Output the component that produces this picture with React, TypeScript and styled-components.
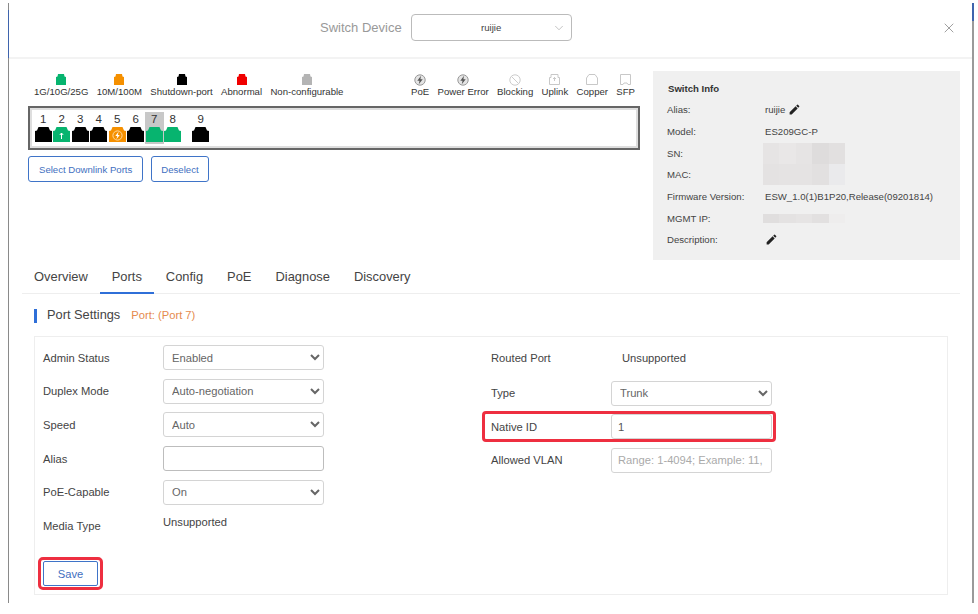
import React from 'react';
import styled, { createGlobalStyle } from 'styled-components';
import { ChevronDown, X } from 'lucide-react';
import { MdEdit } from 'react-icons/md';

const GlobalStyle = createGlobalStyle`
  html, body {
    margin: 0;
    background: #fff;
    overflow: hidden;
  }
  body {
    font-family: "Liberation Sans", Arial, sans-serif;
    color: #333;
  }
`;

const PORT_PATH = 'M0 15V4l2-.5L3.500 0h10L15 3.500l2 .5v11z';

const PortIcon = ({ color, kind }: { color: string; kind?: 'up' | 'poe' }) => (
  <svg width="17" height="15" viewBox="0 0 17 15">
    <path d={PORT_PATH} fill={color} />
    {kind === 'up' && <path d="M8.5 6v6M6.8 8l1.700-2 1.700 2" stroke="#fff" fill="none" strokeWidth="1" />}
    {kind === 'poe' && (
      <>
        <circle cx="8.5" cy="8.5" r="4.6" fill="none" stroke="#ffd9a0" strokeWidth="1" />
        <path d="M9.600 4.800 6.300 9h2l-.9 3.200L10.800 8h-2z" fill="#fff" />
      </>
    )}
  </svg>
);

const LegendPort = ({ color }: { color: string }) => (
  <svg width="10" height="11" viewBox="0 0 10 11">
    <path d="M0 11V3l1.500-.5L2 0h6l.5 2.500L10 3v8z" fill={color} />
  </svg>
);

const BoltIcon = () => (
  <svg width="12" height="12" viewBox="0 0 12 12">
    <circle cx="6" cy="6" r="5.200" fill="#e4e4e4" stroke="#999" />
    <path d="M7 1.800 3.300 6.700h2.200L4.800 10.200 8.700 5.200H6.400z" fill="#555" />
  </svg>
);

const BlockIcon = () => (
  <svg width="12" height="12" viewBox="0 0 12 12">
    <circle cx="6" cy="6" r="5.200" fill="none" stroke="#ccc" />
    <path d="M2.500 2.500l7 7" stroke="#ccc" />
  </svg>
);

const UplinkIcon = () => (
  <svg width="11" height="11" viewBox="0 0 11 11">
    <path d="M.5 10.500V3.500h1.500V.5h7v3h1.500v7z" fill="none" stroke="#c8c8c8" />
    <path d="M5.500 7V3.500M4 5l1.500-1.500L7 5" fill="none" stroke="#bbb" strokeWidth=".8" />
  </svg>
);

const CopperIcon = () => (
  <svg width="12" height="11" viewBox="0 0 12 11">
    <path d="M.5 10.500V4L3 .5h6L11.500 4v6.500z" fill="none" stroke="#c8c8c8" />
  </svg>
);

const SfpIcon = () => (
  <svg width="11" height="11" viewBox="0 0 11 11">
    <path d="M.5.500h10v10H8l-1-1.500H4l-1 1.500H.5z" fill="none" stroke="#c8c8c8" />
  </svg>
);

const statusLegend = [
  { label: '1G/10G/25G', color: '#07b46f' },
  { label: '10M/100M', color: '#f59000' },
  { label: 'Shutdown-port', color: '#000' },
  { label: 'Abnormal', color: '#f00000' },
  { label: 'Non-configurable', color: '#b4b4b4' },
];

const typeLegend = [
  { label: 'PoE', icon: <BoltIcon /> },
  { label: 'Power Error', icon: <BoltIcon /> },
  { label: 'Blocking', icon: <BlockIcon /> },
  { label: 'Uplink', icon: <UplinkIcon /> },
  { label: 'Copper', icon: <CopperIcon /> },
  { label: 'SFP', icon: <SfpIcon /> },
];

const ports: { n: number; color: string; kind?: 'up' | 'poe' }[] = [
  { n: 1, color: '#000' },
  { n: 2, color: '#07b46f', kind: 'up' },
  { n: 3, color: '#000' },
  { n: 4, color: '#000' },
  { n: 5, color: '#f59000', kind: 'poe' },
  { n: 6, color: '#000' },
  { n: 7, color: '#07b46f' },
  { n: 8, color: '#07b46f' },
  { n: 9, color: '#000' },
];

const snMosaic = ['#e6e4e4', '#e9e7e7', '#e6e4e4', '#dedcdc', '#e2e0e0'];
const macMosaic = ['#e4e2e2', '#e5e3e3', '#e5e3e3', '#e2e0e0', '#eaeaec'];
const ipMosaic = ['#e0dede', '#e4e2e2', '#e6e4e4', '#e2e0e0', '#eeeded'];

const tabs = ['Overview', 'Ports', 'Config', 'PoE', 'Diagnose', 'Discovery'];

const App = () => {
  return (
    <>
      <GlobalStyle />
      <Modal>
        <Header>
          <HeaderTitle>Switch Device</HeaderTitle>
          <DeviceSelect>
            ruijie
            <DeviceChevron>
              <ChevronDown size={14} strokeWidth={1} />
            </DeviceChevron>
          </DeviceSelect>
          <CloseButton>
            <X size={16} strokeWidth={1.2} />
          </CloseButton>
        </Header>

        <TopSection>
          <DevicePane>
            <LegendBar>
              <LegendGroup>
                {statusLegend.map((item) => (
                  <LegendItem key={item.label}>
                    <LegendIcon>
                      <LegendPort color={item.color} />
                    </LegendIcon>
                    {item.label}
                  </LegendItem>
                ))}
              </LegendGroup>
              <LegendGroup>
                {typeLegend.map((item) => (
                  <LegendItem key={item.label}>
                    <LegendIcon>{item.icon}</LegendIcon>
                    {item.label}
                  </LegendItem>
                ))}
              </LegendGroup>
            </LegendBar>

            <PortPanel>
              {ports.map((p) => (
                <PortCell key={p.n} $selected={p.n === 7} $gap={p.n === 9}>
                  <PortNumber>{p.n}</PortNumber>
                  <PortIcon color={p.color} kind={p.kind} />
                </PortCell>
              ))}
            </PortPanel>

            <ButtonRow>
              <OutlineButton>Select Downlink Ports</OutlineButton>
              <OutlineButton $tight>Deselect</OutlineButton>
            </ButtonRow>
          </DevicePane>

          <InfoPanel>
            <InfoTitle>Switch Info</InfoTitle>
            <InfoRow>
              <InfoLabel>Alias:</InfoLabel>
              <InfoValue>
                ruijie <MdEdit size={13} color="#222" />
              </InfoValue>
            </InfoRow>
            <InfoRow>
              <InfoLabel>Model:</InfoLabel>
              <InfoValue>ES209GC-P</InfoValue>
            </InfoRow>
            <InfoRow>
              <InfoLabel>SN:</InfoLabel>
              <Mosaic $height={21}>
                {snMosaic.map((c, i) => (
                  <MosaicCell key={i} style={{ background: c }} />
                ))}
              </Mosaic>
            </InfoRow>
            <InfoRow>
              <InfoLabel>MAC:</InfoLabel>
              <Mosaic $height={21}>
                {macMosaic.map((c, i) => (
                  <MosaicCell key={i} style={{ background: c }} />
                ))}
              </Mosaic>
            </InfoRow>
            <InfoRow>
              <InfoLabel>Firmware Version:</InfoLabel>
              <InfoValue>ESW_1.0(1)B1P20,Release(09201814)</InfoValue>
            </InfoRow>
            <InfoRow>
              <InfoLabel>MGMT IP:</InfoLabel>
              <Mosaic $height={9}>
                {ipMosaic.map((c, i) => (
                  <MosaicCell key={i} style={{ background: c }} />
                ))}
              </Mosaic>
            </InfoRow>
            <InfoRow>
              <InfoLabel>Description:</InfoLabel>
              <InfoValue>
                <MdEdit size={13} color="#222" />
              </InfoValue>
            </InfoRow>
          </InfoPanel>
        </TopSection>

        <TabBar>
          {tabs.map((t) => (
            <Tab key={t} $active={t === 'Ports'}>
              {t}
            </Tab>
          ))}
        </TabBar>

        <SectionHead>
          <SectionTitle>Port Settings</SectionTitle>
          <SectionNote>Port: (Port 7)</SectionNote>
        </SectionHead>

        <FormBox>
          <FormColumn>
            <FormRow>
              <FieldLabel>Admin Status</FieldLabel>
              <FieldSelect defaultValue="Enabled">
                <option>Enabled</option>
                <option>Disabled</option>
              </FieldSelect>
            </FormRow>
            <FormRow>
              <FieldLabel>Duplex Mode</FieldLabel>
              <FieldSelect defaultValue="Auto-negotiation">
                <option>Auto-negotiation</option>
                <option>Full</option>
              </FieldSelect>
            </FormRow>
            <FormRow>
              <FieldLabel>Speed</FieldLabel>
              <FieldSelect defaultValue="Auto">
                <option>Auto</option>
                <option>1000M</option>
              </FieldSelect>
            </FormRow>
            <FormRow>
              <FieldLabel>Alias</FieldLabel>
              <FieldInput $strong />
            </FormRow>
            <FormRow>
              <FieldLabel>PoE-Capable</FieldLabel>
              <FieldSelect defaultValue="On">
                <option>On</option>
                <option>Off</option>
              </FieldSelect>
            </FormRow>
            <FormRow>
              <FieldLabel>Media Type</FieldLabel>
              <RaisedValue>Unsupported</RaisedValue>
            </FormRow>
            <SaveWrap>
              <SaveButton>Save</SaveButton>
            </SaveWrap>
          </FormColumn>

          <FormColumn>
            <RoutedRow>
              <FieldLabel>Routed Port</FieldLabel>
              <PlainValue>Unsupported</PlainValue>
            </RoutedRow>
            <FormRow>
              <FieldLabel>Type</FieldLabel>
              <FieldSelect defaultValue="Trunk">
                <option>Trunk</option>
                <option>Access</option>
              </FieldSelect>
            </FormRow>
            <HighlightRow>
              <FieldLabel>Native ID</FieldLabel>
              <FieldInput defaultValue="1" />
            </HighlightRow>
            <FormRow>
              <FieldLabel>Allowed VLAN</FieldLabel>
              <FieldInput placeholder="Range: 1-4094; Example: 11, 33" />
            </FormRow>
          </FormColumn>
        </FormBox>
      </Modal>
    </>
  );
};

const Modal = styled.div`
  position: relative;
  box-sizing: border-box;
  margin: 3px 0 0 8px;
  width: 966px;
  height: 600px;
  background: #fff;
  border-left: 1px solid #8a8a8a;
  border-right: 2px solid #9a9a9a;

  /* blue edge of the window behind the dialog */
  &::before {
    content: '';
    position: absolute;
    left: -1px;
    top: 7px;
    width: 1px;
    height: 48px;
    background: #3f64ad;
  }
  &::after {
    content: '';
    position: absolute;
    right: -2px;
    top: 0;
    width: 2px;
    height: 18px;
    background: #3f64ad;
  }
`;

const Header = styled.div`
  box-sizing: border-box;
  display: flex;
  align-items: center;
  height: 56px;
  padding: 0 15px 5px 311px;
  border-bottom: 2px solid #f3f3f3;
`;

const HeaderTitle = styled.span`
  font-size: 13px;
  color: #999;
  margin-right: 9px;
`;

const DeviceSelect = styled.div`
  position: relative;
  box-sizing: border-box;
  display: flex;
  align-items: center;
  justify-content: center;
  width: 161px;
  height: 27px;
  border: 1px solid #bbb;
  border-radius: 4px;
  font-size: 9.600px;
  color: #444;
`;

const DeviceChevron = styled.span`
  position: absolute;
  right: 5px;
  top: 6px;
  color: #999;
  line-height: 0;
`;

const CloseButton = styled.span`
  margin-left: auto;
  color: #888;
  line-height: 0;
`;

const TopSection = styled.div`
  display: flex;
  justify-content: space-between;
  height: 206px;
  padding: 12px 12px 0 19px;
  box-sizing: border-box;
`;

const DevicePane = styled.div`
  width: 612px;
  padding-top: 3px;
`;

const LegendBar = styled.div`
  display: flex;
  justify-content: space-between;
  padding: 0 5px 0 6px;
`;

const LegendGroup = styled.div`
  display: flex;
  gap: 8.300px;
`;

const LegendItem = styled.div`
  display: flex;
  flex-direction: column;
  align-items: center;
  font-size: 9.600px;
  line-height: 12px;
  color: #333;
  white-space: nowrap;
`;

const LegendIcon = styled.span`
  display: flex;
  height: 12px;
`;

const PortPanel = styled.div`
  box-sizing: border-box;
  display: flex;
  align-items: flex-start;
  height: 44px;
  margin-top: 8px;
  padding: 4px 0 0 4px;
  border: 2px solid #666;
  box-shadow: inset 0 0 0 2px #dedede;
`;

const PortCell = styled.div<{ $selected?: boolean; $gap?: boolean }>`
  display: flex;
  flex-direction: column;
  align-items: center;
  width: 18.500px;
  height: 32px;
  margin-left: ${(p) => (p.$gap ? '9.500px' : '0')};
  background: ${(p) => (p.$selected ? '#c8c8c8' : 'transparent')};
`;

const PortNumber = styled.span`
  font-size: 11.500px;
  line-height: 15px;
  color: #333;
`;

const ButtonRow = styled.div`
  display: flex;
  gap: 8px;
  margin-top: 6px;
`;

const OutlineButton = styled.button<{ $tight?: boolean }>`
  height: 26px;
  padding: 0 ${(p) => (p.$tight ? '9px' : '10px')};
  background: #fff;
  border: 1px solid #3f74c8;
  border-radius: 3px;
  font-family: inherit;
  font-size: 9.600px;
  color: #3f6fc0;
`;

const InfoPanel = styled.div`
  box-sizing: border-box;
  width: 307px;
  height: 189px;
  padding: 12px 14px 0;
  background: #f0f0f0;
  font-size: 9.600px;
  color: #444;
`;

const InfoTitle = styled.div`
  font-weight: bold;
  line-height: 12px;
  margin: 0 0 0 1px;
  color: #333;
`;

const InfoRow = styled.div`
  display: flex;
  align-items: center;
  height: 21.700px;
  &:nth-child(2) {
    margin-top: 4px;
  }
`;

const InfoLabel = styled.span`
  width: 98px;
  flex: none;
`;

const InfoValue = styled.span`
  display: inline-flex;
  align-items: center;
  gap: 3px;
`;

const Mosaic = styled.div<{ $height: number }>`
  display: flex;
  width: 82px;
  height: ${(p) => p.$height}px;
  margin-left: -2px;
`;

const MosaicCell = styled.span`
  flex: 1;
`;

const TabBar = styled.div`
  display: flex;
  height: 28px;
  margin: 0 12px 0 13px;
  border-bottom: 1px solid #eee;
`;

const Tab = styled.div<{ $active?: boolean }>`
  box-sizing: border-box;
  height: 29px;
  padding: 0 12px;
  font-size: 12.900px;
  line-height: 24px;
  color: #444;
  border-bottom: 2px solid ${(p) => (p.$active ? '#2f6fd8' : 'transparent')};
`;

const SectionHead = styled.div`
  display: flex;
  align-items: center;
  height: 14px;
  margin: 15px 0 13px 25px;
  padding-left: 10px;
  border-left: 3px solid #2f6fd8;
`;

const SectionTitle = styled.span`
  font-size: 12.800px;
  line-height: 14px;
  margin-bottom: 2px;
  color: #444;
`;

const SectionNote = styled.span`
  margin: 0 0 2px 11px;
  font-size: 11.200px;
  line-height: 14px;
  color: #e58a4e;
`;

const FormBox = styled.div`
  box-sizing: border-box;
  display: grid;
  grid-template-columns: 448px 1fr;
  width: 914px;
  height: 259px;
  margin-left: 25px;
  padding: 8px;
  border: 1px solid #eee;
`;

const FormColumn = styled.div`
  display: flex;
  flex-direction: column;
`;

const FormRow = styled.div`
  position: relative;
  display: flex;
  align-items: center;
  height: 25px;
  margin-bottom: 8.700px;
`;

const RoutedRow = styled(FormRow)`
  height: 26px;
  margin-bottom: 9.500px;
`;

const HighlightRow = styled(FormRow)`
  &::after {
    content: '';
    position: absolute;
    left: -9px;
    top: -3px;
    width: 294px;
    height: 31px;
    box-sizing: border-box;
    border: 3px solid #ee2f40;
    border-radius: 4px;
    pointer-events: none;
  }
`;

const FieldLabel = styled.label`
  width: 120px;
  flex: none;
  font-size: 11.200px;
  color: #444;
`;

const FieldSelect = styled.select`
  box-sizing: border-box;
  width: 161px;
  height: 25px;
  padding: 0 4px;
  background: #fff;
  border: 1px solid #d4d4d4;
  border-radius: 3px;
  font-family: inherit;
  font-size: 11.200px;
  color: #666;
`;

const FieldInput = styled.input<{ $strong?: boolean }>`
  box-sizing: border-box;
  width: 161px;
  height: 25px;
  padding: 0 6px;
  background: #fff;
  border: 1px solid ${(p) => (p.$strong ? '#bdbdbd' : '#d4d4d4')};
  border-radius: 3px;
  font-family: inherit;
  font-size: 11.200px;
  color: #555;
  outline: none;
  &::placeholder {
    color: #aaa;
  }
`;

const PlainValue = styled.span`
  padding-left: 11px;
  font-size: 11.200px;
  color: #444;
`;

const RaisedValue = styled.span`
  margin-top: -8px;
  font-size: 11.200px;
  color: #444;
`;

const SaveWrap = styled.div`
  margin-top: 10px;
  width: 65px;
  margin-left: -5px;
  padding: 1px 2px;
  box-sizing: border-box;
  border: 3px solid #ee2f40;
  border-radius: 5px;
  height: 33px;
  line-height: 0;
`;

const SaveButton = styled.button`
  box-sizing: border-box;
  width: 55px;
  height: 25px;
  background: #fff;
  border: 1px solid #3f74c8;
  border-radius: 2px;
  font-family: inherit;
  font-size: 11.200px;
  color: #3f6fc0;
`;

export default App;
